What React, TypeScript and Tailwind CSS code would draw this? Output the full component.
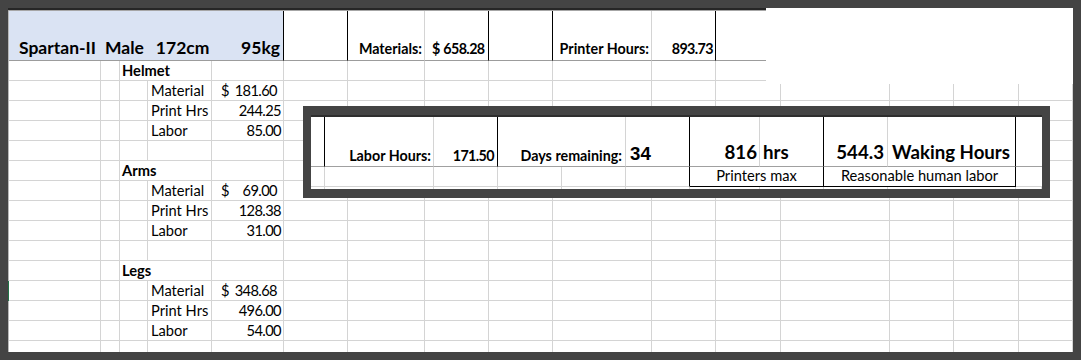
import React from "react";

type Line = { label?: string; value?: string; money?: boolean; heading?: string };

// rows under the title row, one per sheet row
const rows: Line[] = [
  { heading: "Helmet" },
  { label: "Material", value: "181.60", money: true },
  { label: "Print Hrs", value: "244.25" },
  { label: "Labor", value: "85.00" },
  {},
  { heading: "Arms" },
  { label: "Material", value: "69.00", money: true },
  { label: "Print Hrs", value: "128.38" },
  { label: "Labor", value: "31.00" },
  {},
  { heading: "Legs" },
  { label: "Material", value: "348.68", money: true },
  { label: "Print Hrs", value: "496.00" },
  { label: "Labor", value: "54.00" },
  {},
];

const cell = "border-r border-b border-[#d4d4d4]";
const body = "font-['Lato',sans-serif] text-[14.67px] leading-none text-black";
// Lato figures run wider than the sheet's, so numbers are set a touch tighter
const num = "tracking-[-0.6px]";
const label = "font-['Lato',sans-serif] font-bold text-[14.3px] leading-none text-black";
const big = "font-['Lato',sans-serif] font-bold text-[18.67px] leading-none text-black";

function SheetRow({ line, index }: { line: Line; index: number }) {
  const marker = index === 11 ? "bg-[#217346]" : "bg-[#b8b8b8]";
  return (
    <>
      <div className={marker} />
      <div className={cell} />
      <div className={cell} />
      {line.heading ? (
        <div className={`${cell} col-span-2 flex items-end pl-[2px] pb-[1px] font-bold ${body}`}>
          {line.heading}
        </div>
      ) : (
        <>
          <div className={cell} />
          <div className={`${cell} flex items-end pl-[3px] pb-[1px] ${body}`}>{line.label}</div>
        </>
      )}
      <div className={`${cell} flex items-end pb-[1px] ${body} ${line.money ? "pl-[9px] pr-[6px]" : "pr-[2px]"}`}>
        {line.money && <span>$</span>}
        <span className={`ml-auto ${num}`}>{line.value}</span>
      </div>
      {Array.from({ length: 11 }).map((_, i) => (
        <div key={i} className={cell} />
      ))}
    </>
  );
}

function TitleRow() {
  const base = "border-b border-b-[#9c9c9c] flex items-end";
  return (
    <>
      <div className="bg-[#b8b8b8]" />
      <div className={`${base} col-span-5 bg-[#dae3f3] border-r border-r-black pl-[10px] pr-[3px] pb-[4px] font-['Lato',sans-serif] font-bold text-[17.5px] leading-none text-black`}>
        <span>Spartan-II</span>
        <span className="ml-[9px]">Male</span>
        <span className="ml-[12px]">172cm</span>
        <span className="ml-auto">95kg</span>
      </div>
      <div className={`${base} border-r border-r-black`} />
      <div className={`${base} border-r border-r-[#d4d4d4] justify-end pr-[2px] pb-[4px] ${label}`}>Materials:</div>
      <div className={`${base} border-r border-r-black pl-[7px] pb-[4px] gap-[3px] ${label}`}>
        <span>$</span>
        <span className={num}>658.28</span>
      </div>
      <div className={`${base} border-r border-r-black`} />
      <div className={`${base} border-r border-r-[#d4d4d4] justify-end pr-[2px] pb-[4px] ${label}`}>Printer Hours:</div>
      <div className={`${base} border-r border-r-black justify-end pr-[2px] pb-[4px] ${label}`}>
        <span className={num}>893.73</span>
      </div>
      {Array.from({ length: 5 }).map((_, i) => (
        <div key={i} className={`${base} border-r border-r-[#d4d4d4]`} />
      ))}
    </>
  );
}

// the framed summary block pasted over the sheet
function Summary() {
  const small = "font-['Lato',sans-serif] text-[14.67px] leading-none text-black";
  const top = "border-b border-b-[#a0a0a0] flex items-end";
  const grid = "border-r border-b border-[#d4d4d4]";
  return (
    <div className="absolute left-[295px] top-[98px] w-[747px] h-[92px] bg-white border-x-[8px] border-y-[9px] border-[#444444] overflow-hidden">
      <div className="h-[2px] bg-[#2e2e2e]" />
      <div className="grid grid-cols-[14px_109px_64px_64px_64px_64px_70px_64px_64px_128px_26px] grid-rows-[50px_20px_20px]">
        <div className={`${top} border-r border-r-black`} />
        <div className={`${top} border-r border-r-[#d4d4d4] justify-end pr-[2px] pb-[3px] ${label}`}>Labor Hours:</div>
        <div className={`${top} border-r border-r-black justify-end pr-[3px] pb-[3px] ${label}`}>
          <span className={num}>171.50</span>
        </div>
        <div className={`${top} col-span-2 border-r border-r-[#d4d4d4] justify-end pr-[3px] pb-[3px] ${label}`}>Days remaining:</div>
        <div className={`${top} border-r border-r-black pl-[4px] pb-[2px] font-['Liberation_Sans',Arial,sans-serif] font-bold text-[18.67px] leading-none text-black`}>34</div>
        <div className={`${top} border-r border-r-[#d4d4d4] justify-end pr-[2px] pb-[4px] ${big}`}>816</div>
        <div className={`${top} border-r border-r-black pl-[3px] pb-[4px] ${big}`}>hrs</div>
        <div className={`${top} border-r border-r-[#d4d4d4] justify-end pr-[3px] pb-[4px] ${big}`}>544.3</div>
        <div className={`${top} border-r border-r-black pl-[4px] pb-[4px] ${big}`}>Waking Hours</div>
        <div className={top} />

        <div className={grid} />
        <div className={grid} />
        <div className={grid} />
        <div className={grid} />
        <div className={grid} />
        <div className="border-r border-r-black border-b border-b-[#d4d4d4]" />
        <div className={`col-span-2 border-r border-b border-black flex items-end justify-center pb-[2px] ${small}`}>Printers max</div>
        <div className={`col-span-2 border-r border-b border-black flex items-end justify-center pb-[2px] ${small}`}>Reasonable human labor</div>
        <div className="border-b border-[#d4d4d4]" />

        {Array.from({ length: 11 }).map((_, i) => (
          <div key={i} className={grid} />
        ))}
      </div>
    </div>
  );
}

export default function App() {
  return (
    <div className="w-[1081px] h-[360px] bg-[#444444] p-[8px]">
      <div className="relative h-[344px] bg-white overflow-hidden">
        <div className="h-[2px] bg-[#262626]" />
        <div className="h-px bg-[#a6a6a6]" />
        <div className="grid grid-cols-[1px_92px_19px_28px_64px_72px_64px_77px_64px_64px_99px_64px_65px_109px_64px_65px_54px] grid-rows-[50px_repeat(15,20px)]">
          <TitleRow />
          {rows.map((line, i) => (
            <SheetRow key={i} line={line} index={i} />
          ))}
        </div>
        <div className="absolute left-[758px] top-0 w-[307px] h-[76px] bg-white" />
        <Summary />
      </div>
    </div>
  );
}
